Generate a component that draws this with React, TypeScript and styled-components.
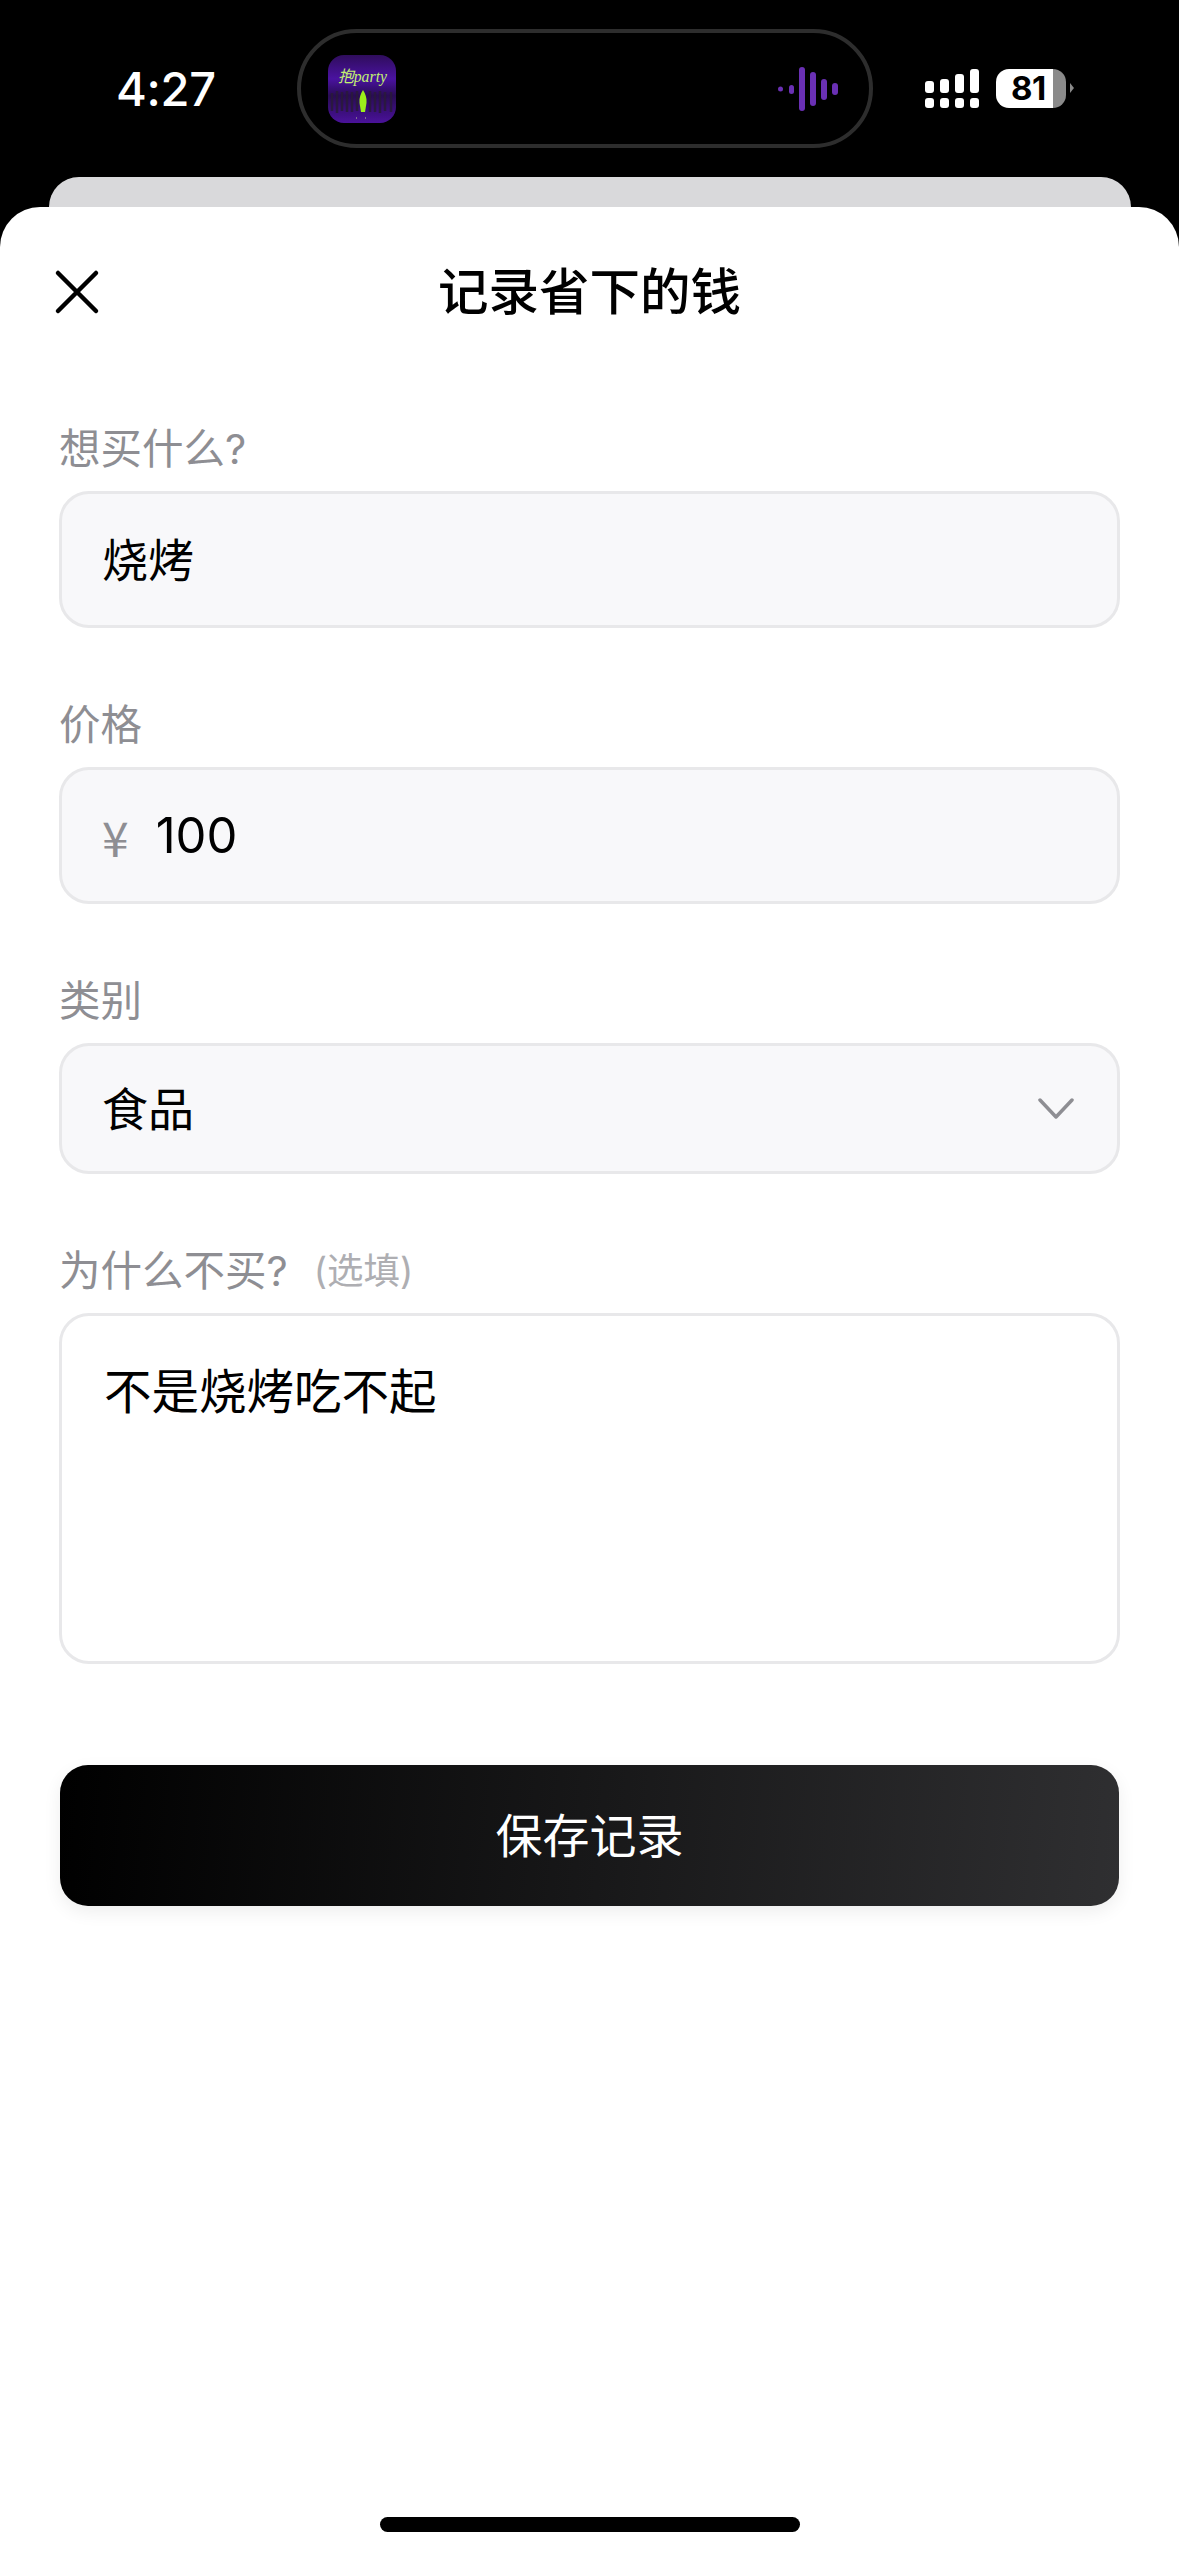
import React from "react";
import styled, { createGlobalStyle } from "styled-components";

const Global = createGlobalStyle`
  html, body { margin: 0; padding: 0; background: #000; }
  * { box-sizing: border-box; }
`;

const sans = `"Inter", "Noto Sans CJK SC", "Liberation Sans", sans-serif`;
const cjk = `"Noto Sans CJK SC", "Inter", sans-serif`;

const Screen = styled.div`
  width: 1179px;
  height: 2556px;
  background: #000;
  display: flex;
  flex-direction: column;
  overflow: hidden;
  font-family: ${cjk};
`;

const StatusBar = styled.div`
  height: 177px;
  flex: none;
  display: flex;
  align-items: flex-start;
  padding-top: 29px;
`;

const Time = styled.div`
  width: 297px;
  padding-left: 116px;
  height: 119px;
  display: flex;
  align-items: center;
  color: #fff;
  font: 500 47px/1 ${sans};
  letter-spacing: -0.3px;
`;

const Island = styled.div`
  width: 576px;
  height: 119px;
  border: 4px solid #2d2d2d;
  border-radius: 60px;
  display: flex;
  align-items: center;
  justify-content: space-between;
  padding: 0 31px 0 27px;
`;

const Album = styled.svg`
  width: 68px;
  height: 68px;
  border-radius: 16px;
  display: block;
`;

const Wave = styled.svg`
  width: 60px;
  height: 44px;
  display: block;
`;

const StatusRight = styled.div`
  flex: 1;
  display: flex;
  align-items: center;
  height: 119px;
  padding-left: 52px;
  gap: 17px;
`;

const Signal = styled.svg`
  width: 54px;
  height: 39px;
  display: block;
`;

const Battery = styled.div`
  position: relative;
  width: 70px;
  height: 39px;
  border-radius: 13px;
  background: linear-gradient(90deg, #fff 0 57px, #8a8a8a 57px);
  display: flex;
  align-items: center;
  padding-left: 15px;
  color: #000;
  font: 700 33px/1 ${sans};
  letter-spacing: -0.5px;
  &::after {
    content: "";
    position: absolute;
    left: 74px;
    top: 14px;
    border-left: 4px solid #8a8a8a;
    border-top: 5.5px solid transparent;
    border-bottom: 5.5px solid transparent;
  }
`;

const BackCard = styled.div`
  height: 30px;
  flex: none;
  margin: 0 48px 0 49px;
  background: #d9d9db;
  border-radius: 30px 30px 0 0;
`;

const Sheet = styled.div`
  flex: 1;
  background: #fff;
  border-radius: 40px 40px 0 0;
  padding: 40px 59px 24px;
  display: flex;
  flex-direction: column;
`;

const Header = styled.div`
  height: 90px;
  display: grid;
  grid-template-columns: 1fr auto 1fr;
  align-items: center;
  margin-bottom: 88px;
`;

const CloseIcon = styled.svg`
  width: 46px;
  height: 46px;
  margin-left: -5px;
  display: block;
`;

const Title = styled.div`
  font: 500 50.5px/82px ${cjk};
  height: 90px;
  color: #000;
`;

const Label = styled.div`
  height: 48px;
  font: 400 41.5px/48px ${sans};
  color: #8e8e93;
  margin-bottom: 18px;
  display: flex;
  align-items: center;
`;

const Optional = styled.span`
  font-size: 36.5px;
  color: #aeaeb2;
  margin-left: 26px;
`;

const Field = styled.div<{ $h: number }>`
  height: ${(p) => p.$h}px;
  background: #f8f8fa;
  border: 3px solid #e8e8ea;
  border-radius: 30px;
  margin-bottom: 73px;
  padding: 0 40px 6px;
  display: flex;
  align-items: center;
  font: 400 46px/1 ${cjk};
  color: #000;
`;

const PriceField = styled(Field)`
  padding-bottom: 0;
`;

const Currency = styled.span`
  font: 400 48px/1 ${cjk};
  color: #8e8e93;
  margin-right: 27px;
`;

const Amount = styled.span`
  font: 400 49px/1 ${sans};
`;

const Chevron = styled.svg`
  width: 36px;
  height: 24px;
  margin: 6px 3px 0 auto;
  display: block;
`;

const TextBox = styled(Field)`
  background: #fff;
  align-items: flex-start;
  padding: 49px 42px 0 42px;
  font-size: 47.5px;
  margin-bottom: 101px;
`;

const SaveButton = styled.div`
  height: 141px;
  margin: 0 1px;
  border-radius: 28px;
  background: linear-gradient(95deg, #000 0%, #2f2f31 100%);
  box-shadow: 0 6px 18px rgba(0, 0, 0, 0.07);
  color: #fff;
  font: 400 47px/135px ${cjk};
  text-align: center;
`;

const HomeBar = styled.div`
  margin: auto 320px 0 321px;
  height: 15px;
  background: #000;
  border-radius: 8px;
`;

const AlbumText = styled.text`
  font: italic 400 16px "Liberation Serif", "Noto Sans CJK SC", serif;
  fill: #c2f070;
`;

export default function App() {
  return (
    <Screen>
      <Global />
      <StatusBar>
        <Time>4:27</Time>
        <Island>
          <Album viewBox="0 0 68 68">
            <defs>
              <linearGradient id="bg" x1="0" y1="0" x2="0" y2="1">
                <stop offset="0" stopColor="#2f0d5c" />
                <stop offset="0.35" stopColor="#4a12a0" />
                <stop offset="0.6" stopColor="#2a0d55" />
                <stop offset="1" stopColor="#4a129a" />
              </linearGradient>
            </defs>
            <rect width="68" height="68" fill="url(#bg)" />
            <g stroke="#2a1a3a" strokeWidth="2.5" opacity="0.85">
              <path d="M4 38v18M9 36v22M14 37v19M19 36v21M24 37v20M29 36v20M42 36v21M47 37v20M52 36v22M57 37v19M63 37v20" />
            </g>
            <path d="M35 35c-2.500 4-4 8-3.500 13l1.500 9h4l1.500-9c.5-5-1-9-3.500-13z" fill="#9cf01a" />
            <AlbumText x="10" y="27" textLength="49" lengthAdjust="spacingAndGlyphs">抱party</AlbumText>
            <path d="M28 63h1M37 63h1" stroke="#b6c890" strokeWidth="1.2" />
          </Album>
          <Wave viewBox="0 0 60 44" fill="#6a30b4">
            <circle cx="2.500" cy="22" r="2.500" />
            <rect x="11" y="18" width="5" height="9" rx="2.500" />
            <rect x="21" y="0" width="6" height="44" rx="3" />
            <rect x="32" y="5" width="6" height="34" rx="3" />
            <rect x="43" y="12" width="6" height="21" rx="3" />
            <rect x="54" y="16" width="6" height="12" rx="3" />
          </Wave>
        </Island>
        <StatusRight>
          <Signal viewBox="0 0 54 39" fill="#fff">
            <rect x="0" y="12" width="9" height="12" rx="3" />
            <rect x="15" y="10" width="9" height="14" rx="3" />
            <rect x="30" y="5" width="9" height="19" rx="3" />
            <rect x="45" y="0" width="9" height="24" rx="3" />
            <rect x="0" y="29" width="9" height="10" rx="3" />
            <rect x="15" y="29" width="9" height="10" rx="3" />
            <rect x="30" y="29" width="9" height="10" rx="3" />
            <rect x="45" y="29" width="9" height="10" rx="3" />
          </Signal>
          <Battery>81</Battery>
        </StatusRight>
      </StatusBar>
      <BackCard />
      <Sheet>
        <Header>
          <CloseIcon viewBox="0 0 46 46" fill="none" stroke="#000" strokeWidth="4.5" strokeLinecap="round">
            <path d="M4 4l38 38M42 4L4 42" />
          </CloseIcon>
          <Title>记录省下的钱</Title>
        </Header>

        <Label>想买什么?</Label>
        <Field $h={137}>烧烤</Field>

        <Label>价格</Label>
        <PriceField $h={137}>
          <Currency>¥</Currency>
          <Amount>100</Amount>
        </PriceField>

        <Label>类别</Label>
        <Field $h={131}>
          食品
          <Chevron viewBox="0 0 36 24" fill="none" stroke="#8e8e93" strokeWidth="3.500" strokeLinecap="round" strokeLinejoin="round">
            <path d="M2 3l16 17L34 3" />
          </Chevron>
        </Field>

        <Label>
          为什么不买?<Optional>(选填)</Optional>
        </Label>
        <TextBox $h={351}>不是烧烤吃不起</TextBox>

        <SaveButton>保存记录</SaveButton>
        <HomeBar />
      </Sheet>
    </Screen>
  );
}
